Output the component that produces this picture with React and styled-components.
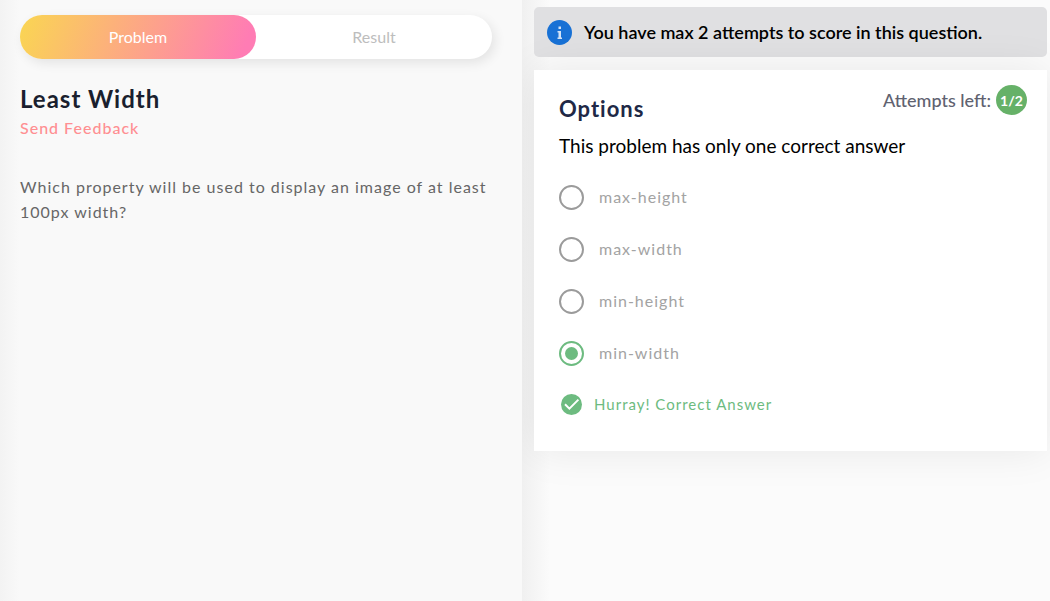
import React, { useState } from "react";
import styled, { createGlobalStyle } from "styled-components";

const GlobalStyle = createGlobalStyle`
  *, *::before, *::after { box-sizing: border-box; }
  body {
    margin: 0;
    background: #fbfbfb;
    color: #000;
    font-family: Lato, "Open Sans", sans-serif;
    font-size: 16px;
  }
  h1, h2, p { margin: 0; }
`;

const Page = styled.div`
  display: grid;
  grid-template-columns: minmax(0, 522fr) minmax(0, 528fr);
  min-height: 100vh;
  overflow: hidden;
`;

const ProblemPane = styled.main`
  position: relative;
  z-index: 1;
  padding: 15px 30px 24px 20px;
  background: linear-gradient(90deg, #f3f3f3 0, #f9f9f9 20px);
`;

const Tabs = styled.div`
  display: flex;
  height: 44px;
  border-radius: 22px;
  background: #fff;
  box-shadow: 3px 4px 12px rgba(0, 0, 0, 0.09);
`;

const Tab = styled.button`
  flex: 1;
  border: 0;
  border-radius: 22px;
  padding: 0 0 2px;
  font: inherit;
  cursor: pointer;
  color: ${(p) => (p.$active ? "#fff" : "#bdbdbd")};
  background: ${(p) =>
    p.$active ? "linear-gradient(110deg, #fad652 0%, #ff7cb4 94%)" : "transparent"};
`;

const Title = styled.h1`
  margin-top: 24px;
  font-size: 24px;
  line-height: 32px;
  font-weight: 700;
  color: #1a1f2e;
  letter-spacing: 1px;
`;

const FeedbackLink = styled.a`
  display: inline-block;
  margin-top: 3px;
  line-height: 20px;
  font-weight: 500;
  color: #ff8f92;
  text-decoration: none;
  letter-spacing: 1px;
`;

const Question = styled.p`
  margin-top: 36px;
  line-height: 25px;
  color: #666;
  letter-spacing: 1px;
`;

const AnswerPane = styled.section`
  padding: 7px 3px 24px 12px;
  background: linear-gradient(90deg, #f0f0f0 0, #fbfbfb 28px);
`;

const Notice = styled.div`
  display: flex;
  align-items: center;
  gap: 12px;
  height: 50px;
  padding: 0 13px;
  border-radius: 5px;
  background: #e0e0e2;
  font-size: 18px;
  font-weight: 600;
`;

const Card = styled.form`
  position: relative;
  margin-top: 13px;
  padding: 23px 25px 36px;
  background: #fff;
  box-shadow: 0 0 40px rgba(0, 0, 0, 0.08);
`;

const CardTitle = styled.h2`
  font-size: 22px;
  line-height: 32px;
  font-weight: 700;
  color: #202846;
  letter-spacing: 1px;
`;

const Attempts = styled.div`
  position: absolute;
  top: 15px;
  right: 20px;
  display: flex;
  align-items: center;
  gap: 5px;
  font-size: 18px;
  font-weight: 500;
  color: #606270;
`;

const AttemptsBadge = styled.span`
  display: grid;
  place-items: center;
  width: 31px;
  height: 30px;
  border-radius: 50%;
  background: #66b168;
  color: #fff;
  font-size: 14px;
  font-weight: 700;
`;

const Hint = styled.p`
  margin-top: 8px;
  font-size: 19px;
  line-height: 26px;
`;

const OptionList = styled.div`
  display: grid;
  gap: 27px;
  margin-top: 26px;
`;

const Option = styled.label`
  display: flex;
  align-items: center;
  gap: 15px;
  line-height: 20px;
  color: #a3a3a3;
  letter-spacing: 1px;
  cursor: pointer;

  span { padding-bottom: 2px; }
`;

const Radio = styled.input`
  appearance: none;
  display: grid;
  place-items: center;
  width: 25px;
  height: 25px;
  margin: 0;
  border: 2px solid #9b9b9b;
  border-radius: 50%;
  cursor: pointer;

  &:checked { border-color: #6dbb80; }
  &:checked::after {
    content: "";
    width: 13px;
    height: 13px;
    border-radius: 50%;
    background: #6dbb80;
  }
`;

const Verdict = styled.p`
  display: flex;
  align-items: center;
  gap: 12px;
  margin-top: 27px;
  padding-left: 2px;
  font-size: 15px;
  line-height: 22px;
  color: #6dbb80;
  letter-spacing: 1px;
`;

const InfoIcon = () => (
  <svg width="25" height="25" viewBox="0 0 25 25" aria-hidden="true">
    <circle cx="12.5" cy="12.5" r="12.5" fill="#1871d5" />
    <path d="M11.5 6.5h2.5v2.5h-2.5zM10.5 11h3.5v6.5h1v1.5h-4.500v-1.500h1v-5h-1z" fill="#d3e3f6" />
  </svg>
);

const CheckIcon = () => (
  <svg width="21" height="21" viewBox="0 0 21 21" aria-hidden="true">
    <circle cx="10.5" cy="10.5" r="10.5" fill="#6dbb80" />
    <path d="M4 10.2l4.400 4.400 9-9" fill="none" stroke="#fff" strokeWidth="2" />
  </svg>
);

const options = ["max-height", "max-width", "min-height", "min-width"];

export default function App() {
  const [tab, setTab] = useState("Problem");
  const [answer, setAnswer] = useState("min-width");

  return (
    <>
      <GlobalStyle />
      <Page>
        <ProblemPane>
          <Tabs role="tablist">
            {["Problem", "Result"].map((name) => (
              <Tab
                key={name}
                type="button"
                role="tab"
                aria-selected={tab === name}
                $active={tab === name}
                onClick={() => setTab(name)}
              >
                {name}
              </Tab>
            ))}
          </Tabs>
          <Title>Least Width</Title>
          <FeedbackLink href="#feedback">Send Feedback</FeedbackLink>
          <Question>
            Which property will be used to display an image of at least 100px width?
          </Question>
        </ProblemPane>
        <AnswerPane>
          <Notice>
            <InfoIcon />
            <span>You have max 2 attempts to score in this question.</span>
          </Notice>
          <Card>
            <CardTitle>Options</CardTitle>
            <Attempts>
              Attempts left: <AttemptsBadge>1/2</AttemptsBadge>
            </Attempts>
            <Hint id="hint">This problem has only one correct answer</Hint>
            <OptionList role="radiogroup" aria-labelledby="hint">
              {options.map((name) => (
                <Option key={name}>
                  <Radio
                    type="radio"
                    name="answer"
                    value={name}
                    checked={answer === name}
                    onChange={() => setAnswer(name)}
                  />
                  <span>{name}</span>
                </Option>
              ))}
            </OptionList>
            <Verdict>
              <CheckIcon />
              Hurray! Correct Answer
            </Verdict>
          </Card>
        </AnswerPane>
      </Page>
    </>
  );
}
